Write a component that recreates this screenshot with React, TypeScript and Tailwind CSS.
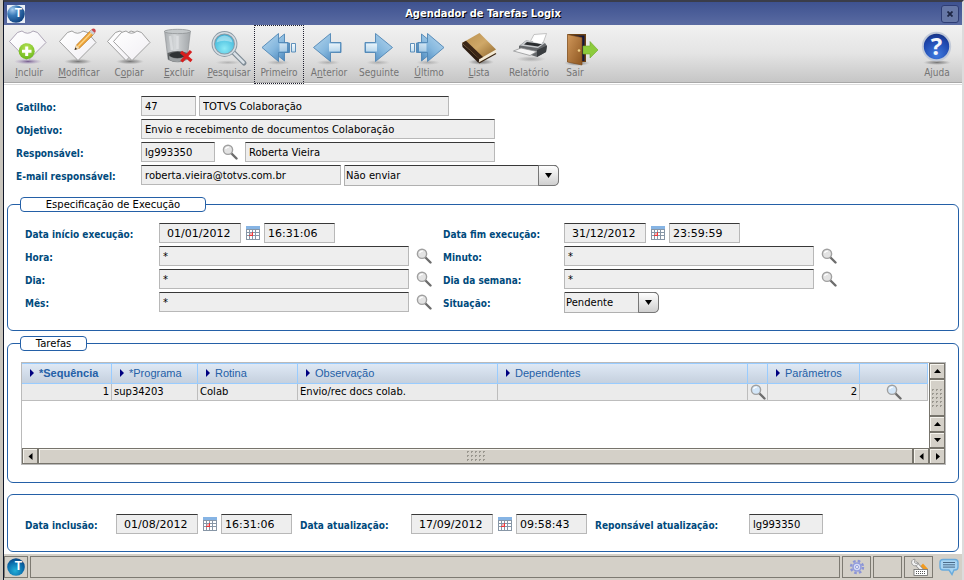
import React from "react";

const sans = "font-['DejaVu_Sans','Noto_Sans',sans-serif]";
const condensed = "font-['DejaVu_Sans_Condensed','DejaVu_Sans',sans-serif]";
const fieldBox =
  "h-5 shrink-0 border border-[#b8b8b8] border-t-[#383838] bg-[#eeeeee] text-black outline-none";

/* ---------- toolbar drawings (50 x 42 canvas) ---------- */

function Canvas({ children }: { children: React.ReactNode }) {
  return (
    <svg viewBox="0 0 50 42" className="h-[42px] w-[50px] shrink-0" aria-hidden="true">
      {children}
    </svg>
  );
}

function Defs() {
  return (
    <svg width="0" height="0" className="absolute" aria-hidden="true">
      <defs>
        <linearGradient id="blueArrow" x1="0" y1="0" x2="1" y2="1">
          <stop offset="0" stopColor="#b9d8ee" />
          <stop offset="0.5" stopColor="#86b8de" />
          <stop offset="1" stopColor="#3a78b2" />
        </linearGradient>
        <linearGradient id="tail" x1="0" y1="0" x2="0" y2="1">
          <stop offset="0" stopColor="#f4fafd" />
          <stop offset="1" stopColor="#c4dff1" />
        </linearGradient>
        <linearGradient id="paper" x1="0" y1="0" x2="1" y2="1">
          <stop offset="0" stopColor="#ffffff" />
          <stop offset="1" stopColor="#f1eff4" />
        </linearGradient>
        <radialGradient id="shade">
          <stop offset="0" stopColor="#555" stopOpacity="0.75" />
          <stop offset="0.6" stopColor="#777" stopOpacity="0.4" />
          <stop offset="1" stopColor="#999" stopOpacity="0" />
        </radialGradient>
        <radialGradient id="purpleShade">
          <stop offset="0" stopColor="#6b4f86" stopOpacity="0.9" />
          <stop offset="1" stopColor="#a58fc0" stopOpacity="0" />
        </radialGradient>
        <radialGradient id="green" cx="0.5" cy="0.3" r="0.7">
          <stop offset="0" stopColor="#b8e356" />
          <stop offset="1" stopColor="#6cb81c" />
        </radialGradient>
        <radialGradient id="lens" cx="0.5" cy="0.7" r="0.8">
          <stop offset="0" stopColor="#8deaf6" />
          <stop offset="0.6" stopColor="#4cbfdf" />
          <stop offset="1" stopColor="#2f9cc6" />
        </radialGradient>
        <linearGradient id="glass" x1="0" y1="0" x2="1" y2="0">
          <stop offset="0" stopColor="#a9adb0" />
          <stop offset="0.4" stopColor="#d4d7d9" />
          <stop offset="1" stopColor="#a2a6a9" />
        </linearGradient>
        <linearGradient id="leather" x1="0" y1="0" x2="1" y2="1">
          <stop offset="0" stopColor="#b98f4d" />
          <stop offset="0.5" stopColor="#cfa868" />
          <stop offset="1" stopColor="#8c6227" />
        </linearGradient>
        <linearGradient id="door" x1="0" y1="0" x2="1" y2="1">
          <stop offset="0" stopColor="#d0975a" />
          <stop offset="1" stopColor="#8d5620" />
        </linearGradient>
        <radialGradient id="helpBlue" cx="0.5" cy="0.8" r="0.8">
          <stop offset="0" stopColor="#3f7be0" />
          <stop offset="0.7" stopColor="#1e46ac" />
          <stop offset="1" stopColor="#17317f" />
        </radialGradient>
        <radialGradient id="globe" cx="0.3" cy="0.25" r="0.85">
          <stop offset="0" stopColor="#a9cdf0" />
          <stop offset="0.4" stopColor="#3a7ab8" />
          <stop offset="1" stopColor="#0a3a78" />
        </radialGradient>
        <radialGradient id="globeTeal" cx="0.45" cy="0.7" r="0.75">
          <stop offset="0" stopColor="#22b0d8" />
          <stop offset="0.6" stopColor="#0a6fae" />
          <stop offset="1" stopColor="#083a78" />
        </radialGradient>
      </defs>
    </svg>
  );
}

function Shirt({ stroke = "#8c8c8c" }: { stroke?: string }) {
  return (
    <path
      d="M5.500 16.500L13.500 7.500L18 6Q23.500 10.500 29 6L33.500 7.500L42 17.500L24 35.500Z"
      fill="url(#paper)"
      stroke={stroke}
      strokeWidth="0.8"
      strokeLinejoin="round"
    />
  );
}

function IncluirIcon() {
  return (
    <Canvas>
      <ellipse cx="24" cy="36.500" rx="14" ry="2.800" fill="url(#purpleShade)" />
      <Shirt stroke="#9a90a6" />
      <circle cx="22.700" cy="26.200" r="8" fill="url(#green)" />
      <path d="M22.700 21.500v9.500M18 26.200h9.500" stroke="#fff" strokeWidth="3" />
    </Canvas>
  );
}

function ModificarIcon() {
  return (
    <Canvas>
      <ellipse cx="24" cy="36.500" rx="14" ry="2.800" fill="url(#shade)" />
      <Shirt />
      <path d="M21 24.500L22.500 20L37 5L40.500 8.500L25.500 23.200Z" fill="#f0a63a" stroke="#a86512" strokeWidth="0.6" />
      <path d="M24 21.500L38.500 6.500" stroke="#fbd58a" strokeWidth="1.200" />
      <path d="M35.500 6.500L37.500 4.500L41 8L39 10Z" fill="#c9ced6" />
      <path d="M37.200 4.700Q39.500 2.500 41.200 4.200Q42.500 6 41 8Z" fill="#c9444a" />
      <path d="M21 24.500L22.500 20L25.500 23.200Z" fill="#f3dcb4" />
      <path d="M20.500 25L21.500 22.500L23 24Z" fill="#222" />
    </Canvas>
  );
}

function CopiarIcon() {
  return (
    <Canvas>
      <ellipse cx="26" cy="36.500" rx="14" ry="2.800" fill="url(#shade)" />
      <g transform="translate(-2 0)">
        <Shirt />
      </g>
      <g transform="translate(4 0)">
        <Shirt />
      </g>
    </Canvas>
  );
}

function ExcluirIcon() {
  return (
    <Canvas>
      <path d="M10.500 6L14 34.500Q24 39.500 33 34.500L36.500 6Z" fill="url(#glass)" stroke="#8b8f92" strokeWidth="0.6" />
      <path d="M13.500 28L14.200 34.500Q24 39.500 32.500 34.500L33.500 28Q24 24 13.500 28Z" fill="#5d6062" />
      <ellipse cx="23.500" cy="30" rx="8" ry="3" fill="#2f3234" />
      <path d="M15 31Q23 36 32 31L31.500 35Q23 39 15.500 35Z" fill="#9b9fa1" />
      <ellipse cx="23.500" cy="6.500" rx="13" ry="2.200" fill="#c4c8ca" stroke="#8f9395" strokeWidth="0.8" />
      <path d="M16 11L18 25M23.500 11V24" stroke="#e6e8ea" strokeWidth="2.500" opacity="0.6" />
      <path d="M27 27L37.500 36M37 26L27.500 36.500" stroke="#d81e1e" strokeWidth="3.200" />
    </Canvas>
  );
}

function PesquisarIcon() {
  return (
    <Canvas>
      <ellipse cx="24" cy="37.500" rx="13" ry="2.200" fill="url(#shade)" opacity="0.4" />
      <path d="M29 27L40 38" stroke="#7f8b95" strokeWidth="5" strokeLinecap="round" />
      <path d="M29 27L39.500 37.500" stroke="#d9e0e6" strokeWidth="2.600" strokeLinecap="round" />
      <circle cx="20.500" cy="19" r="11.200" fill="url(#lens)" stroke="#8c9aa5" strokeWidth="3.400" />
      <circle cx="20.500" cy="19" r="11.200" fill="none" stroke="#d5dde3" strokeWidth="1.500" />
      <path d="M12.500 17.500Q13.500 11 20.500 10.500Q27.500 11 28.500 17.500Q20 14 12.500 17.500Z" fill="#fff" opacity="0.4" />
    </Canvas>
  );
}

function ArrowIcon({ flip = false, double = false }: { flip?: boolean; double?: boolean }) {
  return (
    <Canvas>
      <ellipse cx="24" cy="37.500" rx="12" ry="2.500" fill="url(#shade)" opacity="0.45" />
      <g transform={flip ? "translate(48 0) scale(-1 1)" : undefined} stroke="#4f86b4" strokeWidth="0.9" strokeLinejoin="round">
        {double ? (
          <>
            <path d="M14 22.500L30.500 9V18H35.500V27.500H30.500V36Z" fill="url(#blueArrow)" />
            <path d="M37.500 18.500H41.500V27H37.500Z" fill="url(#tail)" />
            <path d="M8 22.500L24.500 8.500V17.500H34V27.500H24.500V36.500Z" fill="url(#blueArrow)" />
            <path d="M25.500 18.500H33V26.500H25.500Z" fill="url(#tail)" stroke="none" opacity="0.7" />
          </>
        ) : (
          <>
            <path d="M9.500 22.500L26.500 8.500V17.500H37V27.500H26.500V36.500Z" fill="url(#blueArrow)" />
            <path d="M25 18.500H36V26.500H25Z" fill="url(#tail)" stroke="none" opacity="0.9" />
          </>
        )}
      </g>
    </Canvas>
  );
}

function ListaIcon() {
  return (
    <Canvas>
      <ellipse cx="27" cy="37" rx="13" ry="3" fill="url(#shade)" />
      <path d="M8 18L25.500 33.500L24.500 38L8.500 22Z" fill="#2d1d12" />
      <path d="M25.500 33.500L42 24.500V28L25 38Z" fill="#f2e8d2" />
      <path d="M25 38L42 28.500" stroke="#3b2612" strokeWidth="1.200" />
      <path d="M8 18L25.500 8L42 24.500L25.500 34Z" fill="url(#leather)" />
      <path d="M8 18L12 15.700L29 32L25.500 34Z" fill="#3b2616" />
    </Canvas>
  );
}

function RelatorioIcon() {
  return (
    <Canvas>
      <ellipse cx="27" cy="34" rx="15" ry="3" fill="url(#shade)" opacity="0.5" />
      <path d="M25 19L30 9.500L42.500 8.500L38 21Z" fill="#fcfcfc" stroke="#a2a2a2" strokeWidth="0.6" />
      <path d="M15 21L22 15.500L41 18L43 21L42 27L33 32L15 26Z" fill="#65686b" />
      <path d="M22 15.500L41 18L34 23L16 20.500Z" fill="#c7cacd" />
      <path d="M23 17L38 19L34 21.500L20 19.500Z" fill="#2a2d30" />
      <path d="M33 25L43 20.500L42 27L33 32Z" fill="#3a3d40" />
      <path d="M29 17L31 11L41 10L37.500 19Z" fill="#fff" />
      <path d="M9.500 26L17 23L33 26.500L26 30.500Z" fill="#f5f5f5" stroke="#88898b" strokeWidth="0.7" />
    </Canvas>
  );
}

function SairIcon() {
  return (
    <Canvas>
      <g transform="translate(7 0)">
        <ellipse cx="20" cy="38" rx="13" ry="3" fill="url(#shade)" />
        <path d="M10.500 9H29V37H10.500Z" fill="#6b4216" />
        <path d="M12.500 10.500H27.500V36H12.500Z" fill="#14183c" />
        <path d="M26 21H33V16.500L41 25L33 33V29H26Z" fill="#8ccb3c" stroke="#6fa82a" strokeWidth="0.6" />
        <path d="M10.500 9.500L25 12.500V40L10.500 37Z" fill="url(#door)" stroke="#7a4818" strokeWidth="0.6" />
        <circle cx="22" cy="25.500" r="1.300" fill="#f1d28a" />
      </g>
    </Canvas>
  );
}

function AjudaIcon() {
  return (
    <Canvas>
      <ellipse cx="25" cy="37.500" rx="14" ry="2.500" fill="url(#shade)" />
      <circle cx="24.500" cy="21.500" r="13.700" fill="url(#helpBlue)" stroke="#c2cad8" strokeWidth="2" />
      <text x="24.500" y="30" textAnchor="middle" fontSize="24" fontWeight="700" fill="#f4f7fb" fontFamily="'Open Sans', sans-serif">
        ?
      </text>
    </Canvas>
  );
}

/* ---------- small drawings ---------- */

function Lens({ tint = "#e3e3e3" }: { tint?: string }) {
  return (
    <svg viewBox="0 0 16 16" className="h-4 w-4" aria-hidden="true">
      <path d="M9.500 9.500L14.500 14.500" stroke="#6d6d6d" strokeWidth="2.400" strokeLinecap="round" />
      <circle cx="6" cy="5.800" r="4.600" fill={tint} stroke="#a0a0a0" strokeWidth="1.400" />
      <path d="M3.500 5Q4.500 3 7 3" stroke="#fff" strokeWidth="1.200" fill="none" />
    </svg>
  );
}

function Calendar() {
  return (
    <svg viewBox="0 0 14 14" className="h-3.5 w-3.5" aria-hidden="true">
      <rect x="0" y="0" width="14" height="14" fill="#8796a6" />
      <rect x="0" y="0" width="14" height="3" fill="#86b4e4" />
      <path
        d="M1 4h2v2H1zM4 4h2v2H4zM7 4h2v2H7zM10 4h3v2h-3zM1 7h2v2H1zM10 7h3v2h-3zM1 10h2v3H1zM4 10h2v3H4zM7 10h2v3H7zM10 10h3v3h-3zM7 7h2v2H7z"
        fill="#fff"
      />
      <path d="M4 7h2v2H4z" fill="#ffb0b0" />
      <path d="M3 9.500h4M6.500 6v4" stroke="#f03a3a" />
    </svg>
  );
}

function Globe({ fill }: { fill: string }) {
  return (
    <svg viewBox="0 0 18 18" className="h-[18px] w-[18px]" aria-hidden="true">
      <circle cx="9" cy="9" r="8.800" fill={fill} />
      <text x="11.500" y="12" textAnchor="middle" fontSize="12" fontWeight="700" fill="#fff" fontFamily="'Liberation Sans', sans-serif">
        T
      </text>
    </svg>
  );
}

/* ---------- controls ---------- */

function Tool({ text, mnemonic = -1, focused = false, width = "w-[50px]", children }: {
  text: string;
  mnemonic?: number;
  focused?: boolean;
  width?: string;
  children: React.ReactNode;
}) {
  return (
    <button
      type="button"
      className={`flex h-[59px] shrink-0 flex-col items-center ${width} ${
        focused ? "outline-1 -outline-offset-1 outline-dotted outline-[#202030]" : ""
      }`}
    >
      {children}
      <span className={`text-[10px] leading-[11px] whitespace-nowrap text-[#747474] ${condensed}`}>
        {mnemonic < 0 ? (
          text
        ) : (
          <>
            {text.slice(0, mnemonic)}
            <u>{text[mnemonic]}</u>
            {text.slice(mnemonic + 1)}
          </>
        )}
      </span>
    </button>
  );
}

function Label({ htmlFor, width, children }: { htmlFor: string; width: string; children: React.ReactNode }) {
  return (
    <label
      htmlFor={htmlFor}
      className={`shrink-0 pt-1 text-[10px] leading-4 font-bold whitespace-nowrap text-[#004a7c] ${width} ${condensed}`}
    >
      {children}
    </label>
  );
}

function Field({ id, label, value, width }: { id: string; label?: string; value: string; width: string }) {
  return (
    <input
      id={id}
      aria-label={label}
      defaultValue={value}
      className={`${fieldBox} ${sans} pl-[3px] text-[10px] ${width}`}
    />
  );
}

function DateTime({ id, date, time }: { id: string; date: string; time: string }) {
  return (
    <div className="flex shrink-0">
      <input id={id} defaultValue={date} className={`${fieldBox} ${sans} w-[82px] pl-[7px] text-[11px]`} />
      <button type="button" aria-label="Calendário" className="flex h-5 w-[23px] items-center justify-center">
        <Calendar />
      </button>
      <input
        aria-label="Horário"
        defaultValue={time}
        className={`${fieldBox} ${sans} w-[71px] pl-[3px] text-[11px]`}
      />
    </div>
  );
}

function Search() {
  return (
    <button type="button" aria-label="Pesquisar" className="flex h-5 w-[30px] shrink-0 items-center justify-center">
      <Lens />
    </button>
  );
}

function Choice({ id, label, options, width }: { id: string; label?: string; options: string[]; width: string }) {
  return (
    <div className={`grid h-[21px] shrink-0 ${width}`}>
      <select
        id={id}
        aria-label={label}
        className={`col-start-1 row-start-1 appearance-none rounded-r-[5px] border border-[#b0b0b0] border-t-[#383838] bg-[#eeeeee] pb-px pl-px text-[10px] text-black outline-none ${sans}`}
      >
        {options.map((o) => (
          <option key={o}>{o}</option>
        ))}
      </select>
      <span className="pointer-events-none col-start-1 row-start-1 flex w-[21px] items-center justify-center justify-self-end rounded-r-[5px] border border-[#777] bg-linear-to-b from-white to-[#cfcfcf]">
        <svg viewBox="0 0 7 5" className="h-[5px] w-[7px]" aria-hidden="true">
          <path d="M0 0h7L3.500 5z" />
        </svg>
      </span>
    </div>
  );
}

function Group({ title, legendWidth, children }: { title: string; legendWidth: string; children: React.ReactNode }) {
  return (
    <fieldset className="rounded-[6px] border border-[#2460a7]">
      <legend className="ml-3">
        <span
          className={`block h-[15px] rounded-[4px] border border-[#2460a7] bg-white text-center text-[10px] leading-[14px] text-black ${legendWidth} ${sans}`}
        >
          {title}
        </span>
      </legend>
      {children}
    </fieldset>
  );
}

/* ---------- tasks table ---------- */

const columns = [
  { name: "*Sequência", width: "w-[90px]", bold: true },
  { name: "*Programa", width: "w-[86px]" },
  { name: "Rotina", width: "w-[100px]" },
  { name: "Observação", width: "w-[200px]" },
  { name: "Dependentes", width: "" },
  { name: "", width: "w-[20px]" },
  { name: "Parâmetros", width: "w-[92px]" },
  { name: "", width: "w-[68px]" },
];

const arrows = {
  up: "M0 4h7L3.500 0z",
  down: "M0 0h7L3.500 4z",
  left: "M4.500 0v7L0.500 3.500z",
  right: "M1 0v7L5 3.500z",
};

const bevel = "border border-[#77746c] bg-[#d4d0c8] shadow-[inset_1px_1px_0_#f6f4ee]";

function ScrollButton({ dir, label }: { dir: keyof typeof arrows; label: string }) {
  const vertical = dir === "up" || dir === "down";
  return (
    <button type="button" aria-label={label} className={`flex h-4 w-4 shrink-0 items-center justify-center ${bevel}`}>
      <svg viewBox={vertical ? "0 0 7 4" : "0 0 5 7"} className={vertical ? "h-1 w-[7px]" : "h-[7px] w-[5px]"}>
        <path d={arrows[dir]} />
      </svg>
    </button>
  );
}

function Grip({ cols, rows }: { cols: number; rows: number }) {
  const dots = [];
  for (let r = 0; r < rows; r++) {
    for (let c = 0; c < cols; c++) {
      dots.push(<path key={`${r}-${c}`} d={`M${c * 4} ${r * 4}h2v1h-1v1h-1z`} fill="#9a978f" />);
    }
  }
  return (
    <svg width={cols * 4 - 2} height={rows * 4 - 2} aria-hidden="true">
      {dots}
    </svg>
  );
}

function Tasks() {
  const cell = "h-[17px] border-r border-b border-[#bdbdbd] p-0 px-0.5";
  return (
    <div className="mt-[11px] mr-3 mb-[17px] ml-[13px] border border-[#bababa]">
      <div className="flex h-[85px]">
        <div className="flex-1">
          <table className="w-full table-fixed border-separate border-spacing-0">
            <thead>
              <tr>
                {columns.map((c, i) => (
                  <th
                    key={i}
                    scope="col"
                    className={`h-[21px] border-y border-r border-[#99ccff] bg-linear-to-b from-[#dfe9f5] to-[#c5d0de] p-0 pb-0.5 text-left font-['Liberation_Sans',Arial,sans-serif] text-[11px] leading-4 text-[#2460a7] ${
                      c.bold ? "font-bold" : "font-normal"
                    } ${c.width}`}
                  >
                    {c.name && (
                      <span className="flex items-center gap-[5px] pl-2">
                        <svg viewBox="0 0 4 8" className="h-2 w-1" aria-hidden="true">
                          <path d="M0 0L4 4L0 8Z" fill="#000080" />
                        </svg>
                        {c.name}
                      </span>
                    )}
                  </th>
                ))}
              </tr>
            </thead>
            <tbody>
              <tr className={`bg-[#ebebeb] text-[10px] leading-[14px] text-black ${sans}`}>
                <td className={`${cell} text-right`}>1</td>
                <td className={cell}>sup34203</td>
                <td className={cell}>Colab</td>
                <td className={cell}>Envio/rec docs colab.</td>
                <td className={cell} />
                <td className={cell}>
                  <button type="button" aria-label="Pesquisar dependentes" className="block">
                    <Lens tint="#d3e6f8" />
                  </button>
                </td>
                <td className={`${cell} text-right`}>2</td>
                <td className={cell}>
                  <button type="button" aria-label="Pesquisar parâmetros" className="mx-auto block">
                    <Lens tint="#d3e6f8" />
                  </button>
                </td>
              </tr>
            </tbody>
          </table>
        </div>
        <div className="ml-px flex w-4 flex-col bg-[#d4d0c8]">
          <ScrollButton dir="up" label="Acima" />
          <div className={`flex flex-1 items-center justify-center ${bevel}`}>
            <Grip cols={3} rows={5} />
          </div>
          <ScrollButton dir="up" label="Acima" />
          <ScrollButton dir="down" label="Abaixo" />
        </div>
      </div>
      <div className="flex h-4">
        <ScrollButton dir="left" label="Esquerda" />
        <div className={`flex flex-1 items-center justify-center ${bevel}`}>
          <Grip cols={5} rows={3} />
        </div>
        <ScrollButton dir="left" label="Esquerda" />
        <ScrollButton dir="right" label="Direita" />
      </div>
    </div>
  );
}

/* ---------- window ---------- */

export default function App() {
  const panel = "h-[22px] border border-[#7d7a72]";
  return (
    <div className="min-h-screen bg-[#c9c5bd] pl-[3px]">
      <div className="flex min-h-screen flex-col border-t-2 border-r-2 border-l border-t-[#3a3d4a] border-r-[#dcdcdc] border-l-[#10182a] bg-white">
        <Defs />
        <header className="flex h-[23px] shrink-0 items-center bg-linear-to-b from-[#3e5290] to-[#5a6ba2] px-[3px]">
          <span className="flex bg-[#e9eef6]">
            <Globe fill="url(#globe)" />
          </span>
          <h1
            className={`flex-1 text-center text-[11px] leading-4 font-bold text-white [text-shadow:1px_1px_0_#000] ${condensed}`}
          >
            Agendador de Tarefas Logix
          </h1>
          <button
            type="button"
            aria-label="Fechar"
            className="flex h-[18px] w-[18px] items-center justify-center rounded-[3px] border border-[#2d3c74] bg-[#6677a6]"
          >
            <svg viewBox="0 0 6 6" className="h-1.5 w-1.5" aria-hidden="true">
              <path d="M0.500 0.500L5.500 5.500M5.500 0.500L0.500 5.500" stroke="#1d2644" strokeWidth="1.800" />
            </svg>
          </button>
        </header>

        <nav
          aria-label="Ferramentas"
          className="flex h-[58px] shrink-0 border-b border-[#a8a8a8] bg-linear-to-b from-[#f1f1f1] via-[#e4e4e4] via-50% to-[#c6c6c6]"
        >
          <Tool text="Incluir" mnemonic={0}><IncluirIcon /></Tool>
          <Tool text="Modificar" mnemonic={0}><ModificarIcon /></Tool>
          <Tool text="Copiar" mnemonic={1}><CopiarIcon /></Tool>
          <Tool text="Excluir" mnemonic={0}><ExcluirIcon /></Tool>
          <Tool text="Pesquisar" mnemonic={0}><PesquisarIcon /></Tool>
          <Tool text="Primeiro" focused><ArrowIcon double /></Tool>
          <Tool text="Anterior" mnemonic={1}><ArrowIcon /></Tool>
          <Tool text="Seguinte" mnemonic={2}><ArrowIcon flip /></Tool>
          <Tool text="Último" mnemonic={0}><ArrowIcon flip double /></Tool>
          <Tool text="Lista" mnemonic={0}><ListaIcon /></Tool>
          <Tool text="Relatório"><RelatorioIcon /></Tool>
          <Tool text="Sair" width="w-[42px]"><SairIcon /></Tool>
          <div className="ml-auto">
            <Tool text="Ajuda"><AjudaIcon /></Tool>
          </div>
        </nav>

        <main className="mt-px flex-1 border-t border-[#dddddd] px-[3px] pb-0.5">
          <form>
            <div className="flex flex-col gap-[3px] py-[11px] pl-[9px]">
              <div className="flex h-5">
                <Label htmlFor="gatilho" width="w-[125px]">Gatilho:</Label>
                <div className="flex gap-[3px]">
                  <Field id="gatilho" value="47" width="w-[55px]" />
                  <Field id="gatilho-nome" label="Nome do gatilho" value="TOTVS Colaboração" width="w-[250px]" />
                </div>
              </div>
              <div className="flex h-5">
                <Label htmlFor="objetivo" width="w-[125px]">Objetivo:</Label>
                <Field id="objetivo" value="Envio e recebimento de documentos Colaboração" width="w-[354px]" />
              </div>
              <div className="flex h-5">
                <Label htmlFor="responsavel" width="w-[125px]">Responsável:</Label>
                <Field id="responsavel" value="lg993350" width="w-[74px]" />
                <Search />
                <Field id="responsavel-nome" label="Nome do responsável" value="Roberta Vieira" width="w-[250px]" />
              </div>
              <div className="flex h-[21px]">
                <Label htmlFor="email" width="w-[125px]">E-mail responsável:</Label>
                <div className="flex gap-[3px]">
                  <Field id="email" value="roberta.vieira@totvs.com.br" width="w-[200px]" />
                  <Choice id="envio" label="Envio de e-mail" options={["Não enviar", "Enviar"]} width="w-[215px]" />
                </div>
              </div>
            </div>

            <Group title="Especificação de Execução" legendWidth="w-[186px]">
              <div className="grid grid-cols-[418px_1fr] gap-y-[3px] pt-[11px] pb-[17px] pl-[17px]">
                <div className="flex h-5">
                  <Label htmlFor="inicio" width="w-[134px]">Data início execução:</Label>
                  <DateTime id="inicio" date="01/01/2012" time="16:31:06" />
                </div>
                <div className="flex h-5">
                  <Label htmlFor="fim" width="w-[121px]">Data fim execução:</Label>
                  <DateTime id="fim" date="31/12/2012" time="23:59:59" />
                </div>
                <div className="flex h-5">
                  <Label htmlFor="hora" width="w-[134px]">Hora:</Label>
                  <Field id="hora" value="*" width="w-[250px]" />
                  <Search />
                </div>
                <div className="flex h-5">
                  <Label htmlFor="minuto" width="w-[121px]">Minuto:</Label>
                  <Field id="minuto" value="*" width="w-[250px]" />
                  <Search />
                </div>
                <div className="flex h-5">
                  <Label htmlFor="dia" width="w-[134px]">Dia:</Label>
                  <Field id="dia" value="*" width="w-[250px]" />
                  <Search />
                </div>
                <div className="flex h-5">
                  <Label htmlFor="semana" width="w-[121px]">Dia da semana:</Label>
                  <Field id="semana" value="*" width="w-[250px]" />
                  <Search />
                </div>
                <div className="flex h-[21px]">
                  <Label htmlFor="mes" width="w-[134px]">Mês:</Label>
                  <Field id="mes" value="*" width="w-[250px]" />
                  <Search />
                </div>
                <div className="flex h-[21px]">
                  <Label htmlFor="situacao" width="w-[121px]">Situação:</Label>
                  <Choice id="situacao" options={["Pendente", "Concluído"]} width="w-[95px]" />
                </div>
              </div>
            </Group>

            <div className="pt-[5px]">
              <Group title="Tarefas" legendWidth="w-[67px]">
                <Tasks />
              </Group>
            </div>

            <section
              aria-label="Registro"
              className="mt-[11px] flex rounded-[6px] border border-[#2460a7] pt-[19px] pb-[17px] pl-[17px]"
            >
              <Label htmlFor="inclusao" width="w-[91px]">Data inclusão:</Label>
              <DateTime id="inclusao" date="01/08/2012" time="16:31:06" />
              <div className="flex pl-2">
                <Label htmlFor="atualizacao" width="w-[111px]">Data atualização:</Label>
                <DateTime id="atualizacao" date="17/09/2012" time="09:58:43" />
              </div>
              <div className="flex pl-2">
                <Label htmlFor="usuario" width="w-[154px]">Reponsável atualização:</Label>
                <Field id="usuario" value="lg993350" width="w-[74px]" />
              </div>
            </section>
          </form>
        </main>

        <footer className="flex h-[26px] shrink-0 items-center gap-0.5 bg-[#d4d0c8]">
          <div className={`flex w-6 items-center justify-center ${panel}`}>
            <Globe fill="url(#globeTeal)" />
          </div>
          <div className={`flex-1 ${panel}`} />
          <div className={`flex w-[29px] items-center justify-center ${panel}`}>
            <svg viewBox="0 0 16 16" className="h-4 w-4" aria-hidden="true">
              <circle cx="8" cy="8" r="6" fill="none" stroke="#8c95d6" strokeWidth="2.400" strokeDasharray="2.600 2.112" />
              <circle cx="8" cy="8" r="4" fill="#d5dbf6" stroke="#929cdc" strokeWidth="1.600" />
              <circle cx="8" cy="8" r="1.500" fill="#fff" stroke="#7d88d0" strokeWidth="0.800" />
            </svg>
          </div>
          <div className={`w-[29px] ${panel}`} />
          <div className={`flex w-[29px] items-center justify-center ${panel}`}>
            <svg viewBox="0 0 18 18" className="h-[18px] w-[18px]" aria-hidden="true">
              <path d="M8 11L13 5.500L18 11Z" fill="#f39a1c" />
              <path d="M5 4.500L12 12" stroke="#909090" strokeWidth="4" />
              <path d="M5 4.500L12 12" stroke="#f4f4f4" strokeWidth="2.400" />
              <path d="M3 1.500A3.500 3.500 0 1 0 8.500 5L6 5.500L4.500 4.500L5 1.200Z" fill="#f2f2f2" stroke="#8d8d8d" strokeWidth="0.800" />
              <rect x="4" y="11.500" width="13.500" height="6" fill="#fff" stroke="#6a6a6a" strokeWidth="0.800" />
              <path d="M6 13.500h10M6 15.500h10" stroke="#555" strokeDasharray="1 1" />
            </svg>
          </div>
          <button type="button" aria-label="Mensagens" className="flex w-[27px] items-center justify-center">
            <svg viewBox="0 0 20 18" className="h-[18px] w-5" aria-hidden="true">
              <path d="M4 1.500H16Q19 1.500 19 4.500V9Q19 12 16 12H15L13 16.500L10 12H4Q1 12 1 9V4.500Q1 1.500 4 1.500Z" fill="#a8d4f2" stroke="#6aabdc" strokeWidth="1.400" />
              <path d="M4 4.500h12M4 6.800h12M4 9.100h12" stroke="#4a6a88" />
            </svg>
          </button>
        </footer>
      </div>
    </div>
  );
}
